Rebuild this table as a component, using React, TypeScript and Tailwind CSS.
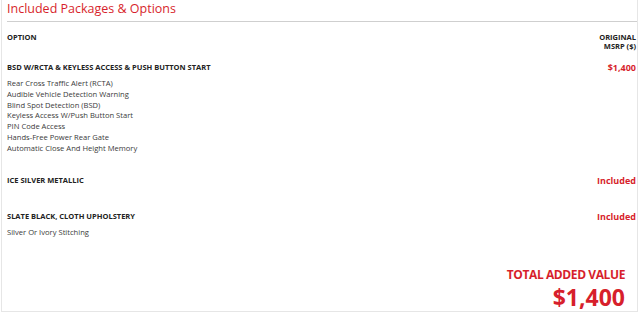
const items = [
  'Rear Cross Traffic Alert (RCTA)',
  'Audible Vehicle Detection Warning',
  'Blind Spot Detection (BSD)',
  'Keyless Access W/Push Button Start',
  'PIN Code Access',
  'Hands-Free Power Rear Gate',
  'Automatic Close And Height Memory',
];

const App = () => {
  return (
    <div className="w-[640px] h-[313px] bg-white font-['Open_Sans',sans-serif] text-[#3a3a3a] overflow-hidden">
      <div className="ml-[1px] w-[637px] h-[312px] border-l border-r border-b border-[#e6e6e6] pl-[5px]">
        {/* title */}
        <h2 className="text-[12.5px] leading-[18px] text-[#d71f2c] mb-[3px]">Included Packages &amp; Options</h2>
        <div className="border-t border-[#cfcfcf]" />

        <div className="pr-[1px]">
          {/* table head */}
          <div className="flex justify-between items-start mt-[11px] text-[7.5px] font-bold leading-[9px] uppercase text-[#222]">
            <div>Option</div>
            <div className="text-right">
              Original
              <br />
              MSRP ($)
            </div>
          </div>

          {/* package row */}
          <div className="flex justify-between items-center mt-[12px] leading-[9px]">
            <div className="text-[7.5px] font-bold uppercase text-[#222]">BSD W/RCTA &amp; Keyless Access &amp; Push Button Start</div>
            <div className="text-[9px] font-bold text-[#d71f2c]">$1,400</div>
          </div>
          <ul className="mt-[6px] text-[7.6px] leading-[10.8px]">
            {items.map((i) => (
              <li key={i}>{i}</li>
            ))}
          </ul>

          <div className="flex justify-between items-center mt-[22px] leading-[9px]">
            <div className="text-[7.5px] font-bold uppercase text-[#222]">Ice Silver Metallic</div>
            <div className="text-[9px] font-bold text-[#d71f2c]">Included</div>
          </div>

          <div className="flex justify-between items-center mt-[27px] leading-[9px]">
            <div className="text-[7.5px] font-bold uppercase text-[#222]">Slate Black, Cloth Upholstery</div>
            <div className="text-[9px] font-bold text-[#d71f2c]">Included</div>
          </div>
          <div className="mt-[6px] text-[7.6px] leading-[10.8px]">Silver Or Ivory Stitching</div>

          {/* total */}
          <div className="mt-[30px] pr-[11px] text-right font-bold text-[#d71f2c]">
            <div className="text-[12px] leading-[16px] tracking-[-0.4px]">TOTAL ADDED VALUE</div>
            <div className="mt-[1px] text-[23px] leading-[26px]">$1,400</div>
          </div>
        </div>
      </div>
    </div>
  );
};

export default App;
